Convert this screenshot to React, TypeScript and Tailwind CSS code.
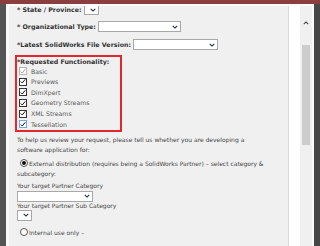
import React from 'react';

const font = { fontFamily: '"DejaVu Sans", Verdana, sans-serif' };

const Chevron: React.FC<{ className?: string }> = ({ className }) => (
  <svg viewBox="0 0 8 5" className={className}>
    <path d="M1 1 L4 4 L7 1" fill="none" stroke="#1c2a4a" strokeWidth="1.4" />
  </svg>
);

const Select: React.FC<{ className: string }> = ({ className }) => (
  <div className={`flex items-center justify-end bg-white border border-[#a8a8a8] pr-[2px] ${className}`}>
    <Chevron className="w-[6px] h-[4px]" />
  </div>
);

const Check: React.FC<{ label: string; disabled?: boolean; focus?: boolean }> = ({ label, disabled, focus }) => (
  <div className="flex items-center h-[10.6px]">
    <span
      className={`ml-[2px] w-[8px] h-[8px] flex items-center justify-center bg-white border ${
        disabled ? 'border-[#b5b5b5]' : focus ? 'border-[#6fa8dc]' : 'border-[#333]'
      }`}
    >
      <svg viewBox="0 0 8 8" className="w-[7px] h-[7px]">
        <path d="M1 4 L3 6 L7 1" fill="none" stroke={disabled ? '#9a9a9a' : '#111'} strokeWidth="1.3" />
      </svg>
    </span>
    <span className="ml-[4px] text-[6.2px] text-[#5a5a5a]">{label}</span>
  </div>
);

const Radio: React.FC<{ on?: boolean }> = ({ on }) => (
  <span className="inline-flex align-middle items-center justify-center w-[8px] h-[8px] rounded-full border border-[#555] bg-white ml-[3px] mr-[1px] -mt-[2px]">
    {on && <span className="w-[4px] h-[4px] rounded-full bg-[#111]" />}
  </span>
);

export default function App() {
  return (
    <div className="w-[320px] h-[246px] overflow-hidden flex flex-col bg-[#4f4f4f]" style={font}>
      <div className="h-[4px] bg-[#8b3e3e]" />
      <div className="flex-1 flex min-h-0">
        <div className="w-[6px] bg-[#555]" />
        <div className="flex flex-1 min-h-0 bg-white border-t-2 border-l-[3px] border-r-2 border-[#fafafa]">
          <div className="w-[280px] bg-[#f0f0f0] border-r border-[#dadada] overflow-hidden text-[6px] text-[#444]">
            <div className="-mt-[2px] pl-[8px] text-[6.3px] font-bold text-[#333]">
              <div className="flex items-center h-[11px]">
                <span>* State / Province:</span>
                <Select className="ml-[2px] w-[15px] h-[11px]" />
              </div>
              <div className="mt-[6px] flex items-center h-[11px]">
                <span>* Organizational Type:</span>
                <Select className="ml-[2px] w-[83px] h-[11px]" />
              </div>
              <div className="mt-[7px] flex items-center h-[11px]">
                <span>*Latest SolidWorks File Version:</span>
                <Select className="ml-[2px] w-[85px] h-[11px]" />
              </div>
            </div>
            <div className="mt-[5px] ml-[6px] w-[107px] border-2 border-[#e0282e]">
              <div className="h-[9px] leading-[9px] text-[6.3px] font-bold text-[#333]">*Requested Functionality:</div>
              <Check label="Basic" disabled />
              <Check label="Previews" />
              <Check label="DimXpert" />
              <Check label="Geometry Streams" />
              <Check label="XML Streams" />
              <Check label="Tessellation" focus />
            </div>
            <div className="pl-[8px] pr-[20px] leading-[10px]">
              <p className="mt-[3px]">
                To help us review your request, please tell us whether you are developing a
                <br />
                software application for:
              </p>
              <p className="mt-[4px]">
                <Radio on />
                External distribution (requires being a SolidWorks Partner) – select category &amp;
                <br />
                subcategory:
              </p>
              <div className="mt-[3px] leading-[8px]">Your target Partner Category</div>
              <Select className="mt-[1px] w-[76px] h-[11px]" />
              <div className="leading-[8px]">Your target Partner Sub Category</div>
              <Select className="w-[15px] h-[11px]" />
              <p className="mt-[7px]">
                <Radio />
                Internal use only –
              </p>
            </div>
          </div>
          <div className="w-[11px] bg-white" />
          <div className="w-[12px] bg-[#f0f0f0] flex flex-col items-center">
            <svg viewBox="0 0 8 5" className="mt-[15px] w-[6px] h-[4px]">
              <path d="M1 4 L4 1 L7 4" fill="none" stroke="#444" strokeWidth="1.4" />
            </svg>
            <div className="mt-[20px] w-[8px] h-[100px] bg-[#cdcdcd]" />
          </div>
        </div>
        <div className="w-[6px] bg-[#474747]" />
      </div>
    </div>
  );
}
